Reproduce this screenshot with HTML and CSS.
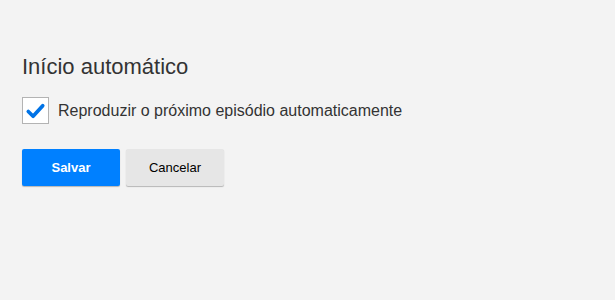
FILE: index.html
```html
<!DOCTYPE html>
<html lang="pt">
<head>
<meta charset="utf-8">
<link rel="stylesheet" href="styles.css">
</head>
<body>
<div class="page">
  <h1 class="title">Início automático</h1>
  <label class="option">
    <span class="box">
      <svg class="check" viewBox="0 0 26 26" width="26" height="26" aria-hidden="true">
        <path d="M5.5 14 L10.5 19 L20.5 8" fill="none" stroke="#0073e6" stroke-width="3.8" stroke-linecap="round" stroke-linejoin="round"/>
      </svg>
    </span>
    <span class="label-text">Reproduzir o próximo episódio automaticamente</span>
  </label>
  <div class="actions">
    <button class="btn btn-blue" type="button">Salvar</button>
    <button class="btn btn-gray" type="button">Cancelar</button>
  </div>
</div>
</body>
</html>
```
FILE: styles.css
```css
html, body {
  margin: 0;
  padding: 0;
  background: #f3f3f3;
}
body {
  font-family: "Liberation Sans", Arial, sans-serif;
  color: #333;
  width: 615px;
  height: 300px;
  overflow: hidden;
}
.page {
  padding: 53px 22px 0;
}
.title {
  margin: 0;
  font-size: 22px;
  font-weight: normal;
  line-height: 28px;
  color: #333;
}
.option {
  display: flex;
  align-items: center;
  gap: 9px;
  margin-top: 16px;
}
.box {
  width: 25px;
  height: 25px;
  border: 1px solid #b3b3b3;
  background: #fff;
  display: flex;
  align-items: center;
  justify-content: center;
  box-sizing: content-box;
}
.check {
  width: 25px;
  height: 25px;
}
.label-text {
  font-size: 16px;
  color: #333;
}
.actions {
  display: flex;
  gap: 6px;
  margin-top: 25px;
}
.btn {
  width: 98px;
  height: 37px;
  border: 0;
  border-radius: 2px;
  font-family: "Liberation Sans", Arial, sans-serif;
  font-size: 13px;
  padding: 0;
  box-shadow: 0 1px 1px rgba(0,0,0,0.25);
}
.btn-blue {
  background: #0080ff;
  color: #fff;
  font-weight: bold;
}
.btn-gray {
  background: #e6e6e6;
  color: #000;
}
```
